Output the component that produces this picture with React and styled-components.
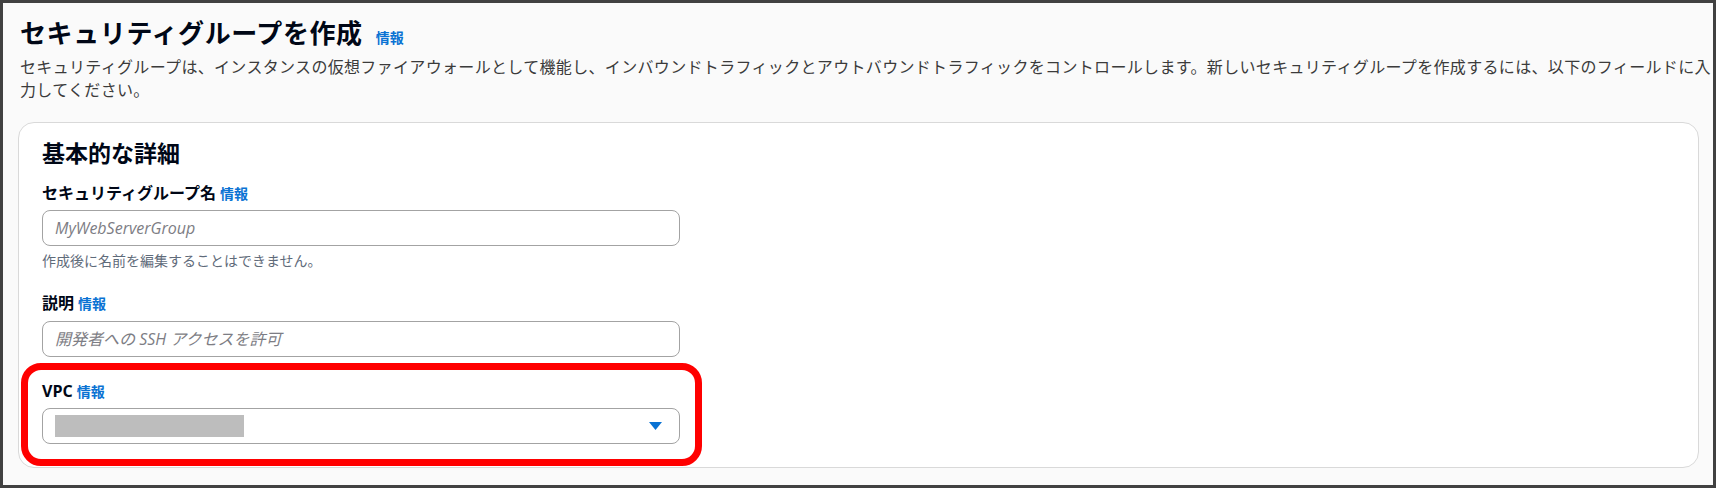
import React from "react";
import styled, { createGlobalStyle } from "styled-components";

const GlobalStyle = createGlobalStyle`
  html, body {
    margin: 0;
    padding: 0;
    background: #ffffff;
  }
  body {
    font-family: "Open Sans", "Noto Sans CJK JP", sans-serif;
    color: #000716;
  }
`;

const Frame = styled.div`
  box-sizing: border-box;
  width: 1716px;
  height: 488px;
  border: 3px solid #414141;
  background: #fafafa;
  display: flex;
  flex-direction: column;
`;

const Header = styled.header`
  padding: 13px 0 0 17px;
`;

const TitleRow = styled.div`
  display: flex;
  align-items: baseline;
  gap: 13px;
`;

const Title = styled.h1`
  margin: 0;
  font-size: 26px;
  line-height: 34px;
  font-weight: 700;
  letter-spacing: 0.6px;
`;

const InfoLink = styled.a`
  color: #0972d3;
  font-size: 14px;
  font-weight: 700;
  text-decoration: none;
  line-height: 1;
`;

const Description = styled.p`
  margin: 6px 0 0;
  font-size: 16px;
  line-height: 23px;
  letter-spacing: 0.33px;
  color: #3b3b3b;
`;

const Card = styled.section`
  box-sizing: border-box;
  margin: 20px 14px 0 15px;
  padding: 15px 23px 1px;
  background: #ffffff;
  border: 1px solid #d9d9d9;
  border-radius: 16px;
`;

const CardTitle = styled.h2`
  margin: 0 0 14px;
  font-size: 23px;
  line-height: 30px;
  font-weight: 700;
`;

const Field = styled.div`
  display: flex;
  flex-direction: column;
  margin-top: ${p => p.$gap || 0}px;
`;

const LabelRow = styled.div`
  display: flex;
  align-items: baseline;
  gap: 4px;
  height: 22px;
  margin-bottom: ${p => p.$below || 6}px;
`;

const Label = styled.label`
  font-size: 16px;
  line-height: 22px;
  font-weight: 700;
`;

const TextInput = styled.input`
  box-sizing: border-box;
  width: 638px;
  height: 36px;
  padding: 0 12px;
  border: 1px solid #a3a3a3;
  border-radius: 8px;
  background: #ffffff;
  font-family: inherit;
  font-size: 16px;
  outline: none;

  &::placeholder {
    color: #7d7d84;
    font-style: italic;
  }
`;

const Helper = styled.div`
  margin-top: 5px;
  font-size: 14px;
  line-height: 20px;
  color: #5f6b7a;
`;

const Highlight = styled.div`
  box-sizing: border-box;
  width: 681px;
  margin: 6px 0 0 -21px;
  padding: 10px 14px 15px;
  border: 7px solid #ff0000;
  border-radius: 20px;
`;

const Select = styled.div`
  box-sizing: border-box;
  width: 638px;
  height: 36px;
  padding: 0 17px 0 12px;
  border: 1px solid #a3a3a3;
  border-radius: 8px;
  background: #ffffff;
  display: flex;
  align-items: center;
  justify-content: space-between;
`;

const Masked = styled.span`
  width: 189px;
  height: 22px;
  background: #bdbdbd;
`;

const Caret = () => (
  <svg width="13" height="8" viewBox="0 0 13 8">
    <path d="M0 0 H13 L6.5 8 Z" fill="#0972d3" />
  </svg>
);

const FormField = ({ label, gap, below, helper, children }) => (
  <Field $gap={gap}>
    <LabelRow $below={below}>
      <Label>{label}</Label>
      <InfoLink href="#">情報</InfoLink>
    </LabelRow>
    {children}
    {helper && <Helper>{helper}</Helper>}
  </Field>
);

const App = () => (
  <>
    <GlobalStyle />
    <Frame>
      <Header>
        <TitleRow>
          <Title>セキュリティグループを作成</Title>
          <InfoLink href="#">情報</InfoLink>
        </TitleRow>
        <Description>
          セキュリティグループは、インスタンスの仮想ファイアウォールとして機能し、インバウンドトラフィックとアウトバウンドトラフィックをコントロールします。新しいセキュリティグループを作成するには、以下のフィールドに入力してください。
        </Description>
      </Header>

      <Card>
        <CardTitle>基本的な詳細</CardTitle>

        <FormField label="セキュリティグループ名" helper="作成後に名前を編集することはできません。">
          <TextInput placeholder="MyWebServerGroup" />
        </FormField>

        <FormField label="説明" gap={21} below={7}>
          <TextInput placeholder="開発者への SSH アクセスを許可" />
        </FormField>

        <Highlight>
          <FormField label="VPC">
            <Select>
              <Masked />
              <Caret />
            </Select>
          </FormField>
        </Highlight>
      </Card>
    </Frame>
  </>
);

export default App;
